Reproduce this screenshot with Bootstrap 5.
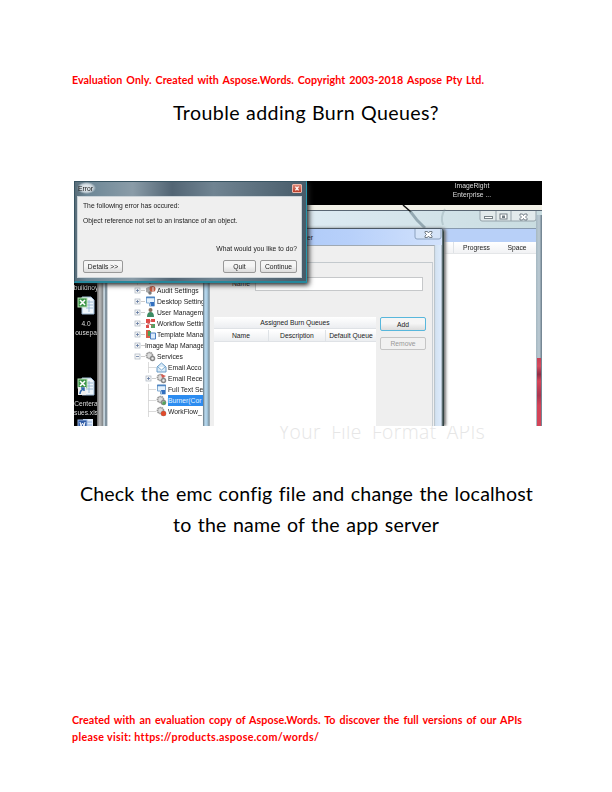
<!DOCTYPE html>
<html lang="en">
<head>
<meta charset="utf-8">
<meta name="viewport" content="width=device-width, initial-scale=1">
<title>Trouble adding Burn Queues?</title>
<link rel="stylesheet" href="https://cdn.jsdelivr.net/npm/bootstrap@5.3.0/dist/css/bootstrap.min.css">
<style>
body{font-family:Lato,sans-serif;color:#000;background:#fff}
.sheet{width:612px;height:792px;padding:71px 70px 0 72px}
.notice{color:#f00;font-weight:700;font-size:10.7px;line-height:17px;white-space:nowrap;letter-spacing:.06px}
.heading{font-size:19.6px;line-height:31px;white-space:nowrap;letter-spacing:.16px}
.fit{text-align:justify;text-align-last:justify}
.loose{letter-spacing:.42px}
.loose-sm{letter-spacing:.33px}
.desk{width:468px;height:245px;margin:53px 0 0 2px;background:#000;font:6.75px/11px "Liberation Sans",Arial,sans-serif;color:#222}
.scene{position:absolute;inset:0;filter:blur(.35px)}
.pane{position:absolute}
.desk span,.desk button{white-space:nowrap}
.shortcut{color:#ddd;text-align:center;line-height:9px}
.desk-icons{left:0;top:102px;width:24px;height:143px;overflow:hidden}
.desk-icons span{font-size:6.6px}
.manager{left:23px;top:24px;width:445px;height:221px;background:linear-gradient(90deg,#d5dfdf,#dceaf2 50%,#c9dce0);border-top:5px solid #f2f1e8}
.manager-bar{height:18px;border-top:1px solid #596673;padding-right:5px}
.manager-body{margin:0 5px 0 11px;height:199px;background:#fff}
.strip{height:14px;background:#b8d0f8;border-top:1px solid #8799ae}
.cols{height:12px;background:linear-gradient(#fff,#f1f2f4);border-bottom:1px solid #e4e6e8;padding-right:2px}
.edge-l{left:23px;top:102px;width:11px;height:143px;background:linear-gradient(90deg,#666 0,#bbb 25%,#878b8d 50%,#d9e9f2 65%,#5f7280 82%,#f5f8fa)}
.edge-r{left:462px;top:34px;width:6px;height:211px;background:linear-gradient(90deg,#a6b8c2,#bccbd4 55%,#657886)}
.alarm{left:463px;top:177px;width:4px;height:68px;background:linear-gradient(#c84055 0,#d44c5f 12%,#902e46 24%,#d54559 34%,#a93750 55%,#d24458 70%)}
.tree{left:34px;top:93px;width:97px;height:152px;background:#fff;overflow:hidden}
.node{height:11.02px;padding-left:26px}
.node svg{width:11px;height:11px;flex:none}
.label{margin-left:1px}
.sub{padding-left:37px}
.picked{background:#2c8cf0;color:#e4f2ff;width:44px;height:11px}
.burner{left:129px;top:47px;width:241px;height:198px;background:linear-gradient(90deg,#63747e 0,#b7d6eb 2px,#a9cee6 4px,#7e93a0 6px,#eee 8px,#eee 229px,#b9c8d3 230px,#d4e3f2 233px,#dceafb 238px,#344 240px);border-top:1px solid #4b5864;border-radius:0 4px 0 0;box-shadow:2px 0 3px #777}
.burner-bar{height:16px;margin:0 2px 0 6px;background:linear-gradient(90deg,#a3c2f4,#b7d0fa 60%,#d2e2fc)}
.burner-body{margin-left:7px;width:225px;height:181px;background:#efefef;border-top:1px solid #9fa9b3;border-right:1px solid #bbc5cc;padding-top:16px}
.tab{height:164px;border-top:1px solid #c3c9cd;border-right:1px solid #c7cdd2;width:223px;padding:14px 0 0 4px}
.field{width:168px;height:14px;border:1px solid #c6c8ca;background:#fff}
.queues{width:162px;background:#fff;height:109px}
.qhead{height:12px;background:linear-gradient(#fff,#eceef1);text-align:center;border-bottom:1px solid #dfe2e6}
.win-btn{font:inherit;color:#222;border:1px solid #999;border-radius:2px;background:linear-gradient(#f5f5f5 45%,#dcdcdc);height:13px;line-height:11px;padding:0;text-align:center}
.add{width:46px;border:1.5px solid #58b7dc;height:14px}
.off{width:46px;color:#999;border-color:#c5c5c5;background:#f1f1f1}
.error{left:0;top:0;width:233px;height:102px;padding:0 4px 4px 2px;background:linear-gradient(90deg,#596d79,#6d8796 5%,#8a9ca8 25%,#526574 42%,#708492 60%,#475b69);border:1px solid #385462;border-right-color:#2698ad;border-bottom:2px solid #25879b;box-shadow:2px 2px 5px #222}
.error-bar{height:14px}
.error-title{padding:1px 3px 0 1px;height:12px;color:#111;background:radial-gradient(closest-side,#dde5ea 45%,#c3ced5 70%,transparent)}
.error-close{width:10px;height:9px;background:linear-gradient(#dc8878,#b93c27);border:1px solid #eeb7aa;border-radius:1px}
.error-body{height:82px;background:#efefef;border:1px solid #cbd3d8;padding:3px 4px 0 5px}
.watermark{margin:-8px 0 0 207px;width:206px;height:28px;color:#e6e6e6;font:300 19.2px/28px "Open Sans",sans-serif;letter-spacing:.42px;white-space:nowrap;clip-path:inset(8px 0 0 0)}
</style>
<script src="https://cdn.jsdelivr.net/npm/bootstrap@5.3.0/dist/js/bootstrap.bundle.min.js"></script>
</head>
<body>
<svg width="0" height="0" class="position-absolute">
<symbol id="plus" viewBox="0 0 11 11"><path d="M7 5.5h4" stroke="#ccc"/><rect x="1" y="3" width="5" height="5" fill="#f7f7f7" stroke="#aab4c0" stroke-width=".7"/><path d="M2 5.5h3M3.5 4v3" stroke="#6279a0" stroke-width=".8"/></symbol>
<symbol id="minus" viewBox="0 0 11 11"><path d="M7 5.5h4" stroke="#ccc"/><rect x="1" y="3" width="5" height="5" fill="#f7f7f7" stroke="#aab4c0" stroke-width=".7"/><path d="M2 5.5h3" stroke="#6279a0" stroke-width=".8"/></symbol>
<symbol id="dash" viewBox="0 0 11 11"><path d="M3.5 0v11M3.5 5.5H11" stroke="#ccc" stroke-width=".7"/></symbol>
<symbol id="audit" viewBox="0 0 11 11"><path d="M1 3l5-2v8L1 7z" fill="#aaa"/><circle cx="7.5" cy="4" r="3" fill="#c65b43"/><path d="M8 2v5" stroke="#eee"/><circle cx="5" cy="8" r="1.7" fill="#777"/></symbol>
<symbol id="page" viewBox="0 0 11 11"><path d="M1.500 1h8v9h-5V7h-3z" fill="#e5f2fd" stroke="#7fa8d0"/><path d="M1 1.500h9" stroke="#4f86c4" stroke-width="1.500"/><path d="M5 6h4v4H6z" fill="#326fc0"/></symbol>
<symbol id="user" viewBox="0 0 11 11"><circle cx="5.500" cy="3" r="2" fill="#86705f"/><path d="M2 10q0-5 3.500-5T9 10z" fill="#3d8b63"/></symbol>
<symbol id="flow" viewBox="0 0 11 11"><path d="M1 1h4v4H1zM6 1h4v3H6zM1 7h3v3H1z" fill="#e04c48"/><path d="M6 6h4v4H6z" fill="#54a263"/><path d="M3 5l5 3M5 3h2M3 4v4" stroke="#c66"/></symbol>
<symbol id="template" viewBox="0 0 11 11"><path d="M1 1h4v8H1z" fill="#d7604a"/><path d="M3 2h3v5H3z" fill="#4fa04f"/><path d="M5.500 4h5v6h-5z" fill="#dbeafa" stroke="#4a7fc1"/></symbol>
<symbol id="gear" viewBox="0 0 11 11"><circle cx="4.500" cy="4.500" r="3" fill="#ddd" stroke="#999" stroke-width="1.700" stroke-dasharray="1.600 .5"/><circle cx="7.500" cy="7.500" r="2" fill="#eee" stroke="#888" stroke-width="1.500"/></symbol>
<symbol id="mail" viewBox="0 0 11 11"><path d="M1 5l4.500-4L10 5v5H1z" fill="#d8eaf8" stroke="#6a9cc7"/><path d="M2 5l3.500 3L9 5" fill="#fff" stroke="#7dadd2"/></symbol>
<symbol id="xls" viewBox="0 0 18 20"><path d="M5 2h9l3 3v14H5z" fill="#eef5fb" stroke="#9ebad5"/><path d="M9 7h7M9 10h7M9 13h7M12 5v12" stroke="#8caece" stroke-width=".8"/><rect x="1" y="3" width="9" height="9" fill="#3b9448" stroke="#b8dfb5"/><path d="M3 5l5 5M8 5l-5 5" stroke="#fff" stroke-width="1.600"/></symbol>
<symbol id="cross" viewBox="0 0 9 8"><path d="M1 1h2.500l1 1.500 1-1.500H8v1.500L6.500 4 8 5.500V7H5.500l-1-1.500-1 1.500H1V5.500L2.500 4 1 2.500z" fill="#fff" stroke="#68737d" stroke-width=".9"/></symbol>
</svg>
<main class="sheet">
  <div class="notice fit" style="width:412px">Evaluation Only. Created with Aspose.Words. Copyright 2003-2018 Aspose Pty Ltd.</div>
  <h1 class="heading loose fit fw-normal mb-0" style="width:266px;margin:9px 0 0 101px">Trouble adding Burn Queues?</h1>
  <section class="desk position-relative overflow-hidden"><div class="scene">
    <div class="pane shortcut" style="left:373px;top:0;width:50px"><span>ImageRight<br>Enterprise ...</span></div>
    <div class="pane manager">
      <div class="manager-bar d-flex justify-content-end">
        <svg width="58" height="11" viewBox="0 0 58 11"><path d="M1 0v8q0 2 2 2h52q2 0 2-2V0M17 0v10M32 0v10" fill="#e2eaec" stroke="#94a2aa"/><rect x="5.500" y="5.500" width="8" height="2" fill="#fff" stroke="#788389"/><rect x="21" y="3" width="7" height="5" fill="#fff" stroke="#737d84"/><rect x="23.500" y="5" width="2" height="1.500" fill="none" stroke="#737d84"/><use href="#cross" x="40" y="2" width="9" height="8"/></svg>
      </div>
      <div class="manager-body"><div class="strip"></div>
        <div class="cols d-flex justify-content-end"><span class="text-center border-start" style="width:46px">Progress</span><span class="text-center" style="width:36px">Space</span></div>
      </div>
    </div>
    <svg class="pane" style="left:328px;top:23px" width="52" height="26"><path d="M1 1l8 7" stroke="#111" stroke-width="1.500"/><path d="M8 7q6 9 15 17" fill="none" stroke="#718995" stroke-width="3" opacity=".65"/><path d="M43 5q-5 8-2 16" fill="none" stroke="#7c9199" stroke-width="2" opacity=".3"/></svg>
    <div class="pane edge-r"></div><div class="pane alarm"></div>
    <div class="pane desk-icons shortcut d-flex flex-column align-items-center">
      <span>buildnoy</span>
      <svg class="flex-shrink-0" style="margin-top:3px" width="18" height="20"><use href="#xls"/></svg>
      <span style="margin-top:4px">4.0</span><span>ousepa</span>
      <svg class="flex-shrink-0" style="margin-top:39px" width="18" height="20"><use href="#xls"/><path d="M1 11h8v8H1z" fill="#eee"/><path d="M3 18q0-4 4-5m-3-1h3v3" fill="none" stroke="#3168ac" stroke-width="1.500"/></svg>
      <span style="margin-top:3px">Centera</span><span>sues.xls</span>
      <svg class="flex-shrink-0" style="margin-top:1px" width="18" height="10"><path d="M6 1h10v9H6z" fill="#dfeaf8"/><path d="M9 4h6M9 7h6" stroke="#8faedb"/><rect x="1" y="2" width="9" height="8" fill="#315da6" stroke="#9db7df"/><path d="M3 4l1 4 1.500-3L7 8l1-4" fill="none" stroke="#fff"/></svg>
    </div>
    <div class="pane edge-l"></div>
    <div class="pane tree">
      <div class="node d-flex"><svg class="plus"><use href="#dash"/></svg><svg><use href="#audit"/></svg></div>
      <div class="node d-flex"><svg class="plus"><use href="#plus"/></svg><svg><use href="#audit"/></svg><span class="label">Audit Settings</span></div>
      <div class="node d-flex"><svg class="plus"><use href="#plus"/></svg><svg><use href="#page"/></svg><span class="label">Desktop Setting</span></div>
      <div class="node d-flex"><svg class="plus"><use href="#plus"/></svg><svg><use href="#user"/></svg><span class="label">User Managem</span></div>
      <div class="node d-flex"><svg class="plus"><use href="#plus"/></svg><svg><use href="#flow"/></svg><span class="label">Workflow Settin</span></div>
      <div class="node d-flex"><svg class="plus"><use href="#plus"/></svg><svg><use href="#template"/></svg><span class="label">Template Mana</span></div>
      <div class="node d-flex"><svg class="plus"><use href="#plus"/></svg><span style="letter-spacing:-.06px">Image Map Manage</span></div>
      <div class="node d-flex"><svg class="plus"><use href="#minus"/></svg><svg><use href="#gear"/></svg><span class="label">Services</span></div>
      <div class="node sub d-flex"><svg class="plus"><use href="#dash"/></svg><svg><use href="#mail"/></svg><span class="label">Email Acco</span></div>
      <div class="node sub d-flex"><svg class="plus"><use href="#plus"/></svg><svg><use href="#gear"/><path d="M5 1l5 2-4 2z" fill="#d65a51"/></svg><span class="label">Email Rece</span></div>
      <div class="node sub d-flex"><svg class="plus"><use href="#dash"/></svg><svg><use href="#page"/></svg><span class="label">Full Text Se</span></div>
      <div class="node sub d-flex"><svg class="plus"><use href="#dash"/></svg><svg><use href="#gear"/><circle cx="8" cy="8" r="1.800" fill="#55a55b"/></svg><span class="label picked">Burner(Cor</span></div>
      <div class="node sub d-flex"><svg class="plus"><use href="#dash"/></svg><svg><use href="#gear"/><circle cx="7.500" cy="7.500" r="2.500" fill="#e04b2c"/></svg><span class="label">WorkFlow_</span></div>
    </div>
    <div class="pane burner">
      <div class="burner-bar d-flex justify-content-between"><span style="margin:3px 0 0 98px">er</span>
        <svg width="28" height="12" viewBox="0 0 28 12"><path d="M1 0v8q0 2 2 2h22q2 0 2-2V0" fill="#d4e3f8" stroke="#8ca2bf"/><use href="#cross" x="10" y="1.500" width="9" height="8"/></svg></div>
      <div class="burner-body"><div class="tab">
        <div class="d-flex"><span class="text-end" style="width:36px;padding-top:1px">Name</span><div class="field" style="margin-left:5px"></div></div>
        <div class="d-flex" style="margin-top:26px;gap:4px">
          <div class="queues"><div class="qhead">Assigned Burn Queues</div><div class="qhead d-flex" style="margin-top:1px"><span style="width:54px">Name</span><span class="border-start" style="width:57px">Description</span><span class="border-start" style="width:51px">Default Queue</span></div></div>
          <div class="d-flex flex-column" style="gap:6px"><button class="win-btn add">Add</button><button class="win-btn off">Remove</button></div>
        </div>
      </div></div>
    </div>
    <div class="pane error">
      <div class="error-bar d-flex justify-content-between align-items-start"><span class="error-title">Error</span><svg class="error-close" style="margin-top:2px" viewBox="0 0 10 9"><path d="M3 2l4 5M7 2L3 7" stroke="#fff" stroke-width="1.600"/></svg></div>
      <div class="error-body">
        <div>The following error has occured:</div>
        <div style="margin-top:4px">Object reference not set to an instance of an object.</div>
        <div class="text-end" style="margin:17px 0 0">What would you like to do?</div>
        <div class="d-flex" style="margin-top:6px"><button class="win-btn me-auto" style="width:40px">Details &gt;&gt;</button><button class="win-btn" style="width:33px;margin-right:4px">Quit</button><button class="win-btn" style="width:37px">Continue</button></div>
      </div>
    </div>
  </div></section>
  <div class="watermark fit">Your File Format APIs</div>
  <p class="heading fit mb-0" style="width:453px;margin:32px 0 0 8px">Check the emc config file and change the localhost</p>
  <p class="heading fit mb-0" style="width:266px;margin-left:101px">to the name of the app server</p>
  <div class="notice" style="margin-top:171px"><div class="fit" style="width:450px">Created with an evaluation copy of Aspose.Words. To discover the full versions of our APIs</div><div class="fit loose-sm" style="width:246px">please visit: https://products.aspose.com/words/</div></div>
</main>
</body>
</html>
